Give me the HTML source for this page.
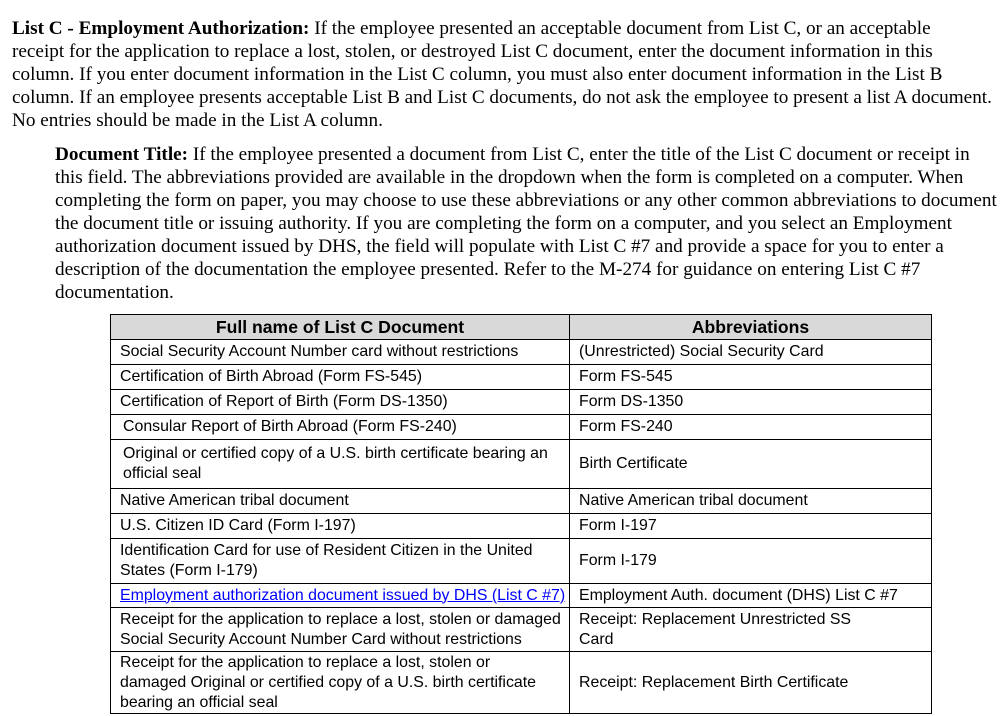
<!DOCTYPE html>
<html><head><meta charset="utf-8"><style>
body{margin:0;background:#fff;width:1006px;height:716px;overflow:hidden;position:relative;font-family:"Liberation Serif",serif;color:#000}
.p{position:absolute;font-size:19.2px;line-height:23px;white-space:nowrap}
.p div{height:23px}
table{position:absolute;left:110px;top:314px;width:821px;border-collapse:collapse;font-family:"Liberation Sans",sans-serif;font-size:15.9px;line-height:20px;table-layout:fixed}
td{border:1px solid #000;padding:0 0 0 9px;vertical-align:middle;white-space:nowrap;overflow:hidden}
th{border:1px solid #000;background:#d9d9d9;font-size:17.6px;height:24px;padding:0}
a{color:#00f;text-decoration:underline}
</style></head><body>
<div class="p" style="left:12px;top:17px">
<div><b>List C - Employment Authorization:</b> If the employee presented an acceptable document from List C, or an acceptable</div>
<div>receipt for the application to replace a lost, stolen, or destroyed List C document, enter the document information in this</div>
<div>column. If you enter document information in the List C column, you must also enter document information in the List B</div>
<div>column. If an employee presents acceptable List B and List C documents, do not ask the employee to present a list A document.</div>
<div>No entries should be made in the List A column.</div>
</div>
<div class="p" style="left:55px;top:143px">
<div><b>Document Title:</b> If the employee presented a document from List C, enter the title of the List C document or receipt in</div>
<div>this field. The abbreviations provided are available in the dropdown when the form is completed on a computer. When</div>
<div>completing the form on paper, you may choose to use these abbreviations or any other common abbreviations to document</div>
<div>the document title or issuing authority. If you are completing the form on a computer, and you select an Employment</div>
<div>authorization document issued by DHS, the field will populate with List C #7 and provide a space for you to enter a</div>
<div>description of the documentation the employee presented. Refer to the M-274 for guidance on entering List C #7</div>
<div>documentation.</div>
</div>
<table>
<colgroup><col style="width:459px"><col style="width:362px"></colgroup>
<tr><th>Full name of List C Document</th><th>Abbreviations</th></tr>
<tr style="height:25px"><td>Social Security Account Number card without restrictions</td><td>(Unrestricted) Social Security Card</td></tr>
<tr style="height:25px"><td>Certification of Birth Abroad (Form FS-545)</td><td>Form FS-545</td></tr>
<tr style="height:25px"><td>Certification of Report of Birth (Form DS-1350)</td><td>Form DS-1350</td></tr>
<tr style="height:25px"><td style="padding-left:12px">Consular Report of Birth Abroad (Form FS-240)</td><td>Form FS-240</td></tr>
<tr style="height:49px"><td style="padding-left:12px">Original or certified copy of a U.S. birth certificate bearing an<br>official seal</td><td>Birth Certificate</td></tr>
<tr style="height:25px"><td>Native American tribal document</td><td>Native American tribal document</td></tr>
<tr style="height:25px"><td>U.S. Citizen ID Card (Form I-197)</td><td>Form I-197</td></tr>
<tr style="height:45px"><td>Identification Card for use of Resident Citizen in the United<br>States (Form I-179)</td><td>Form I-179</td></tr>
<tr style="height:24px"><td><a>Employment authorization document issued by DHS (List C #7)</a></td><td>Employment Auth. document (DHS) List C #7</td></tr>
<tr style="height:44px"><td>Receipt for the application to replace a lost, stolen or damaged<br>Social Security Account Number Card without restrictions</td><td>Receipt: Replacement Unrestricted SS<br>Card</td></tr>
<tr style="height:62px"><td>Receipt for the application to replace a lost, stolen or<br>damaged Original or certified copy of a U.S. birth certificate<br>bearing an official seal</td><td>Receipt: Replacement Birth Certificate</td></tr>
</table>
</body></html>
